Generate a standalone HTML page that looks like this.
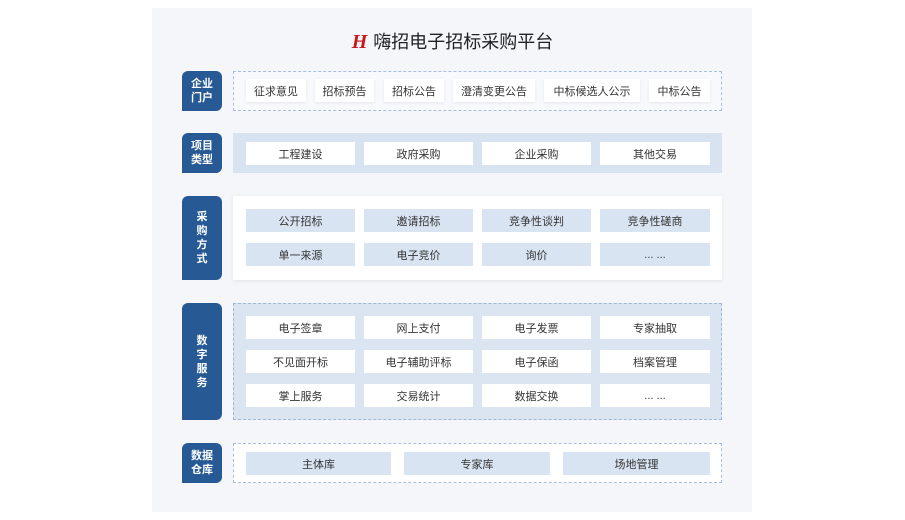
<!DOCTYPE html><html><head><meta charset="utf-8"><style>
*{margin:0;padding:0;box-sizing:border-box}
body{width:905px;height:520px;background:#fff;font-family:"Liberation Sans","Noto Sans CJK SC",sans-serif;position:relative;overflow:hidden}
.panel{position:absolute;left:152px;top:8px;width:600px;height:504px;background:#f4f6f9}
.title{position:absolute;left:0;width:905px;top:28px;text-align:center;font-size:18px;color:#222;font-weight:normal}
.title .h{color:#c8161d;font-style:italic;font-weight:bold;font-family:"Liberation Serif",serif;font-size:20px;margin-right:6px}
.lab{position:absolute;left:182px;width:40px;background:#275a94;color:#fff;font-size:11px;font-weight:bold;display:flex;align-items:center;justify-content:center;text-align:center;line-height:14px;border-radius:6px 6px 6px 0}
.box{position:absolute;left:233px;width:489px}
.dw{border:1px dashed #a8bedb;background:#f7f9fc}
.db{border:1px dashed #9fb6d6;background:#dbe5f2}
.sb{background:#d8e3f1}
.sw{background:#fff;box-shadow:0 1px 4px rgba(0,0,0,.08)}
.it{position:absolute;height:23px;font-size:11px;color:#333;display:flex;align-items:center;justify-content:center}
.w{background:#fff}.wsh{background:#fff;box-shadow:0 1px 3px rgba(0,0,0,.08)}
.b{background:#d9e4f2}
</style></head><body>
<div class="panel"></div>
<div class="title"><span class="h">H</span>嗨招电子招标采购平台</div>

<div class="lab" style="top:71px;height:40px">企业<br>门户</div>
<div class="box dw" style="top:71px;height:40px"></div>
<div class="it wsh" style="top:79px;left:246px;width:60px">征求意见</div>
<div class="it wsh" style="top:79px;left:315px;width:59px">招标预告</div>
<div class="it wsh" style="top:79px;left:384px;width:60px">招标公告</div>
<div class="it wsh" style="top:79px;left:453px;width:82px">澄清变更公告</div>
<div class="it wsh" style="top:79px;left:544px;width:96px">中标候选人公示</div>
<div class="it wsh" style="top:79px;left:649px;width:61px">中标公告</div>

<div class="lab" style="top:133px;height:40px">项目<br>类型</div>
<div class="box sb" style="top:133px;height:40px"></div>
<div class="it w" style="top:142px;left:246px;width:109px">工程建设</div>
<div class="it w" style="top:142px;left:364px;width:109px">政府采购</div>
<div class="it w" style="top:142px;left:482px;width:109px">企业采购</div>
<div class="it w" style="top:142px;left:600px;width:110px">其他交易</div>

<div class="lab" style="top:196px;height:84px">采<br>购<br>方<br>式</div>
<div class="box sw" style="top:196px;height:84px"></div>
<div class="it b" style="top:209px;left:246px;width:109px">公开招标</div>
<div class="it b" style="top:209px;left:364px;width:109px">邀请招标</div>
<div class="it b" style="top:209px;left:482px;width:109px">竞争性谈判</div>
<div class="it b" style="top:209px;left:600px;width:110px">竞争性磋商</div>
<div class="it b" style="top:243px;left:246px;width:109px">单一来源</div>
<div class="it b" style="top:243px;left:364px;width:109px">电子竞价</div>
<div class="it b" style="top:243px;left:482px;width:109px">询价</div>
<div class="it b" style="top:243px;left:600px;width:110px">... ...</div>

<div class="lab" style="top:303px;height:117px">数<br>字<br>服<br>务</div>
<div class="box db" style="top:303px;height:117px"></div>
<div class="it w" style="top:316px;left:246px;width:109px">电子签章</div>
<div class="it w" style="top:316px;left:364px;width:109px">网上支付</div>
<div class="it w" style="top:316px;left:482px;width:109px">电子发票</div>
<div class="it w" style="top:316px;left:600px;width:110px">专家抽取</div>
<div class="it w" style="top:350px;left:246px;width:109px">不见面开标</div>
<div class="it w" style="top:350px;left:364px;width:109px">电子辅助评标</div>
<div class="it w" style="top:350px;left:482px;width:109px">电子保函</div>
<div class="it w" style="top:350px;left:600px;width:110px">档案管理</div>
<div class="it w" style="top:384px;left:246px;width:109px">掌上服务</div>
<div class="it w" style="top:384px;left:364px;width:109px">交易统计</div>
<div class="it w" style="top:384px;left:482px;width:109px">数据交换</div>
<div class="it w" style="top:384px;left:600px;width:110px">... ...</div>

<div class="lab" style="top:443px;height:40px">数据<br>仓库</div>
<div class="box dw" style="top:443px;height:40px;background:#fff"></div>
<div class="it b" style="top:452px;left:246px;width:145px">主体库</div>
<div class="it b" style="top:452px;left:404px;width:146px">专家库</div>
<div class="it b" style="top:452px;left:563px;width:147px">场地管理</div>
</body></html>
